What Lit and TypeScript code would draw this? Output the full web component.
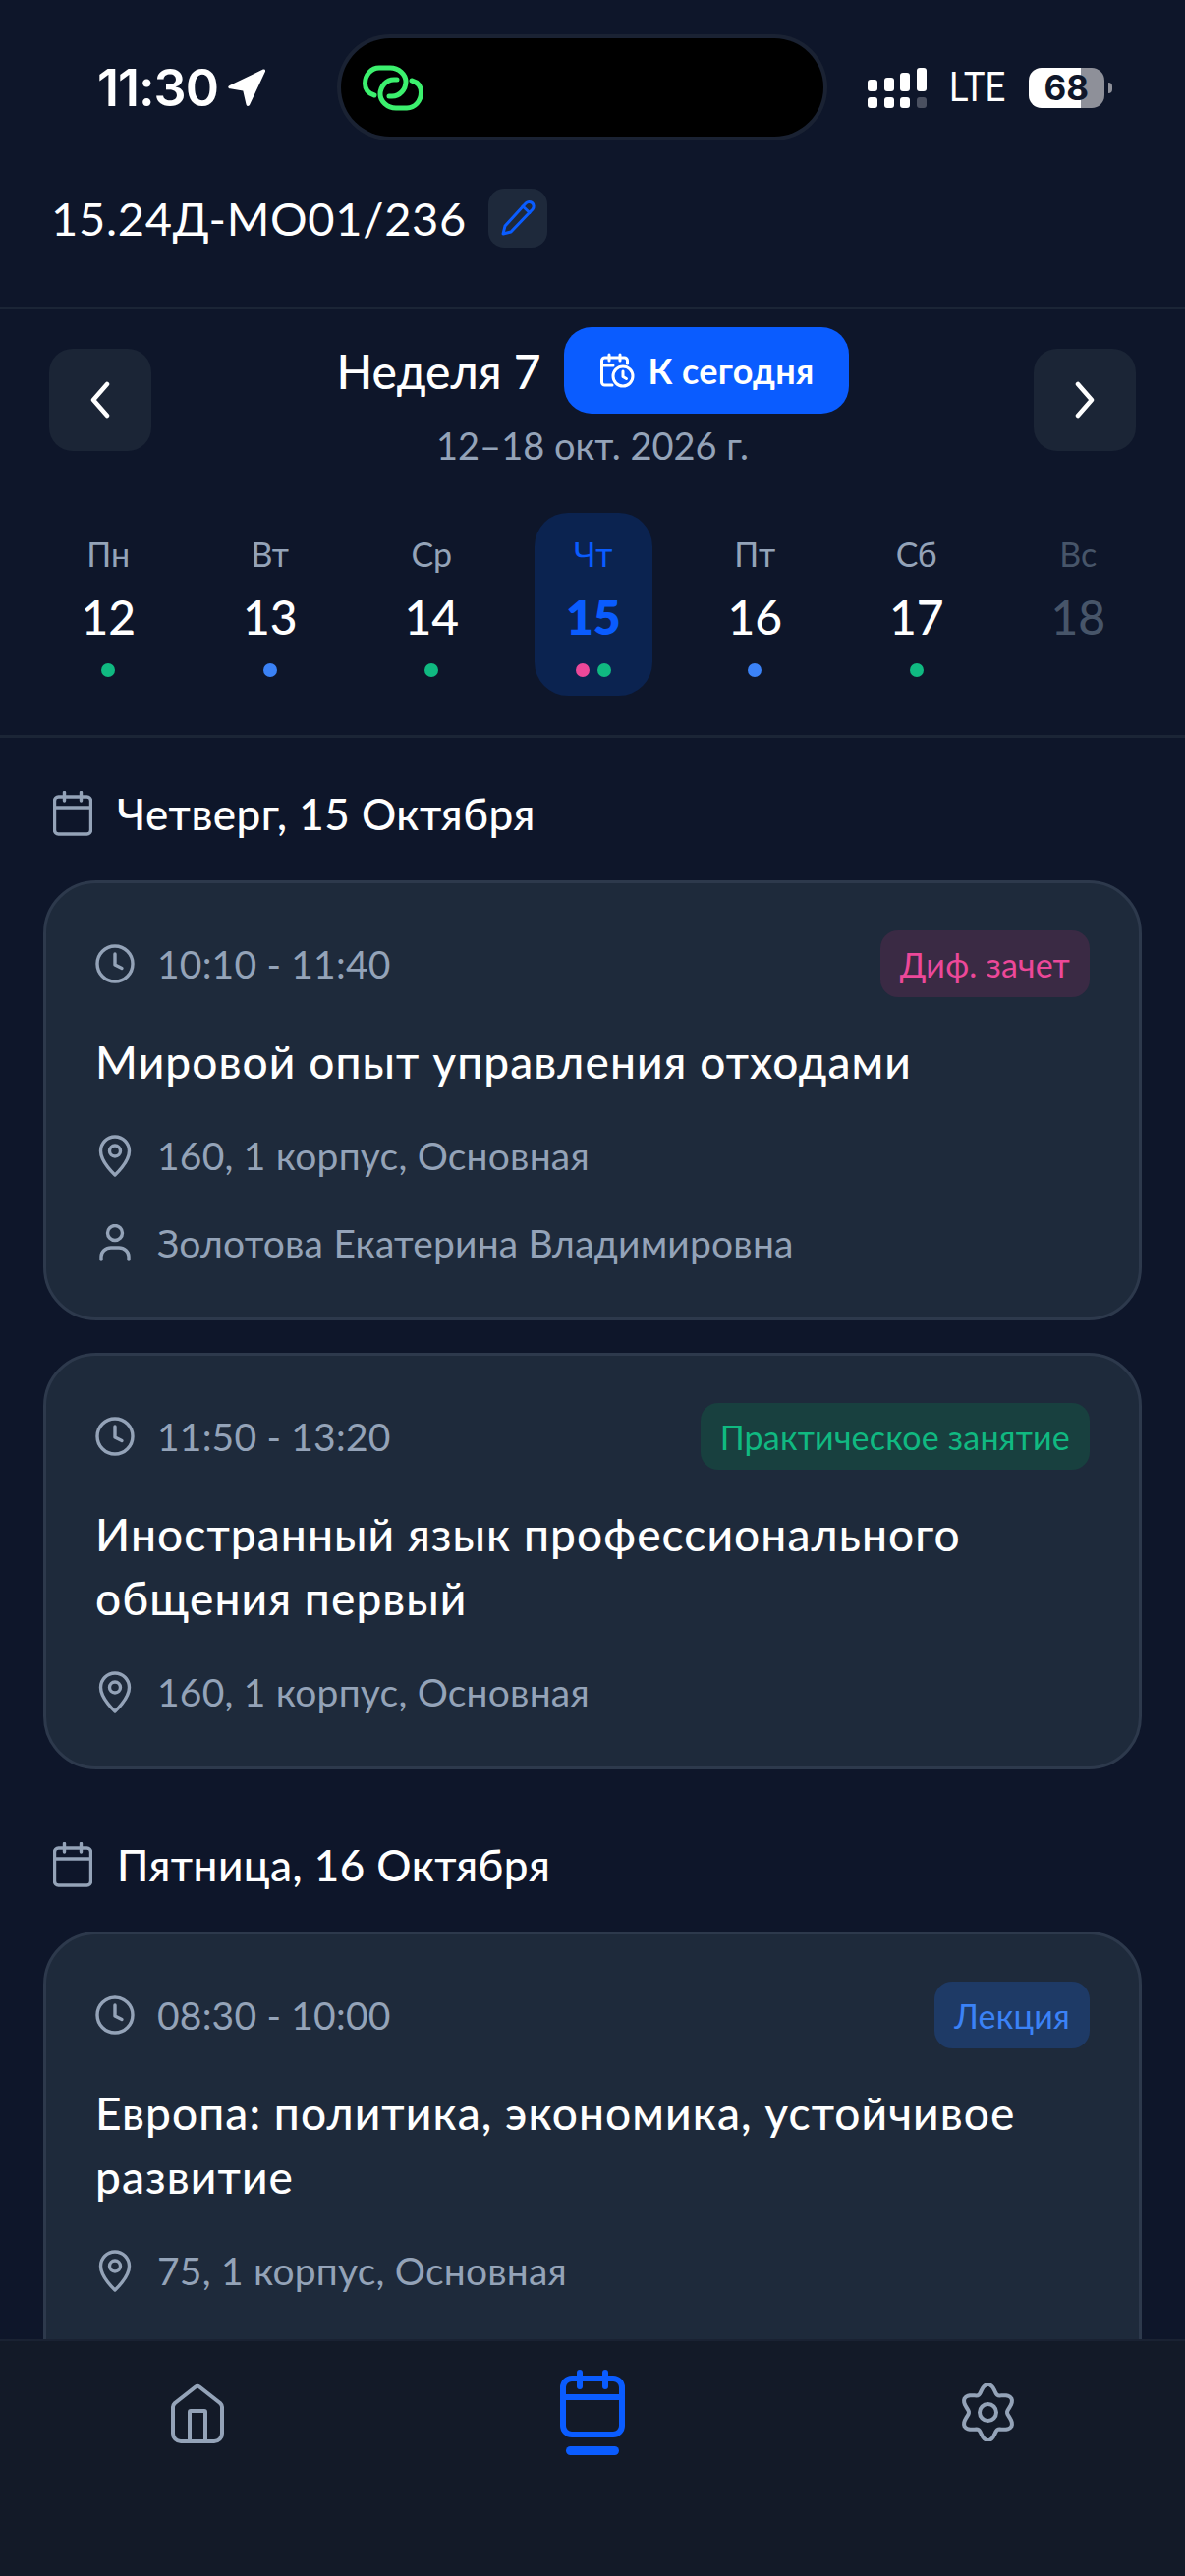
import { LitElement, css, html, svg } from "lit";
import { customElement } from "lit/decorators.js";

type Lesson = {
    time: string;
    tag: string;
    tagType: "pink" | "green" | "blue";
    title: string;
    place: string;
    teacher?: string;
};

const days = [
    { name: "Пн", num: "12", dots: ["green"] },
    { name: "Вт", num: "13", dots: ["blue"] },
    { name: "Ср", num: "14", dots: ["green"] },
    { name: "Чт", num: "15", dots: ["pink", "green"], active: true },
    { name: "Пт", num: "16", dots: ["blue"] },
    { name: "Сб", num: "17", dots: ["green"] },
    { name: "Вс", num: "18", dots: [], off: true },
];

const thursday: Lesson[] = [
    {
        time: "10:10 - 11:40",
        tag: "Диф. зачет",
        tagType: "pink",
        title: "Мировой опыт управления отходами",
        place: "160, 1 корпус, Основная",
        teacher: "Золотова Екатерина Владимировна",
    },
    {
        time: "11:50 - 13:20",
        tag: "Практическое занятие",
        tagType: "green",
        title: "Иностранный язык профессионального общения первый",
        place: "160, 1 корпус, Основная",
    },
];

const friday: Lesson[] = [
    {
        time: "08:30 - 10:00",
        tag: "Лекция",
        tagType: "blue",
        title: "Европа: политика, экономика, устойчивое развитие",
        place: "75, 1 корпус, Основная",
    },
];

// w/h in px, the viewBox is the same size so stroke widths stay real pixels
const icon = (w: number, h: number, body: unknown, sw = 3.4) => html`<svg class="ic" width=${w} height=${h} viewBox="0 0 ${w} ${h}" fill="none" stroke="currentColor" stroke-width=${sw} stroke-linecap="round" stroke-linejoin="round">${body}</svg>`;

const clockIcon = svg`<circle cx="20" cy="20" r="18"/><path d="M20 10v11l7 3.500"/>`;
const pinIcon = svg`<path d="M20 41C20 41 5.500 28 5.500 16.500a14.500 14.500 0 0 1 29 0C34.500 28 20 41 20 41z"/><circle cx="20" cy="16.500" r="5.500"/>`;
const userIcon = svg`<circle cx="20" cy="9" r="7.500"/><path d="M6 36v-3a10 9 0 0 1 10-9h8a10 9 0 0 1 10 9v3"/>`;
const calendarIcon = svg`<rect x="1.500" y="6" width="37" height="38" rx="4"/><path d="M11.500 1.500V10M28.500 1.500V10M1.500 17h37"/>`;

// six soft lobes, same outline as the settings icon
const gearPath = () => {
    const pts: string[] = [];
    for (let a = 0; a < 360; a += 4) {
        const t = (a * Math.PI) / 180;
        const r = 23.5 + 4 * Math.cos(6 * t);
        const x = 27.5 + r * Math.sin(t);
        const y = 29.5 - r * Math.cos(t) * 1.04;
        pts.push(`${x.toFixed(2)} ${y.toFixed(2)}`);
    }
    return "M" + pts.join("L") + "z";
};

@customElement("app-root")
export class AppRoot extends LitElement {
    static styles = css`
    :host {
      display: block;
      width: 1206px;
      height: 2622px;
      background: #0e162a;
      color: #fff;
      font-family: "Lato", "Open Sans", sans-serif;
      position: relative;
      overflow: hidden;
    }
    .ic {
      flex: none;
      display: block;
    }
    .status {
      height: 140px;
      display: grid;
      grid-template-columns: 343px 498px 1fr;
      align-items: center;
      padding-top: 38px;
      box-sizing: border-box;
    }
    .clock {
      display: flex;
      align-items: center;
      justify-content: flex-end;
      gap: 9px;
      padding-right: 72px;
      font-size: 52px;
      font-weight: 600;
      font-family: "Inter", sans-serif;
      letter-spacing: -1px;
    }
    .island {
      height: 100px;
      width: 491px;
      margin-left: 4px;
      border-radius: 50px;
      background: #000;
      box-shadow: 0 0 0 4px #1a2233;
      display: flex;
      align-items: center;
      padding-left: 22px;
      box-sizing: border-box;
    }
    .sys {
      display: flex;
      align-items: center;
      padding-left: 42px;
    }
    .lte {
      width: 56px;
      margin: 0 25px 0 23px;
      font-size: 42px;
      line-height: 42px;
      font-family: "Roboto", sans-serif;
      transform: scaleX(0.87);
      transform-origin: left center;
      white-space: nowrap;
    }
    .signal {
      display: grid;
      grid-template-columns: repeat(4, 10px);
      column-gap: 6.6px;
      row-gap: 6px;
      align-items: end;
    }
    .signal i {
      display: block;
      width: 10px;
      border-radius: 3px;
      background: #fff;
    }
    .batt {
      display: flex;
      align-items: center;
      gap: 4px;
    }
    .batt-body {
      width: 77px;
      height: 41px;
      border-radius: 13px;
      background: linear-gradient(90deg, #fff 0 69%, #8e9099 69%);
      color: #0f172a;
      font: 700 35px "Inter", sans-serif;
      display: flex;
      align-items: center;
      justify-content: center;
    }
    .batt-tip {
      width: 4px;
      height: 11px;
      border-radius: 0 4px 4px 0;
      background: #8e9099;
    }
    .group {
      height: 175px;
      display: flex;
      align-items: center;
      gap: 22px;
      padding: 0 0 8px 52px;
      box-sizing: border-box;
      font-size: 47px;
      border-bottom: 3px solid #1b2536;
      letter-spacing: 0.7px;
    }
    .edit {
      width: 60px;
      height: 60px;
      border-radius: 16px;
      background: #1e293b;
      color: #0a5cff;
      display: flex;
      align-items: center;
      justify-content: center;
    }
    .week {
      padding: 18px 50px 0;
      display: flex;
      justify-content: space-between;
      align-items: flex-start;
    }
    .nav {
      margin-top: 22px;
      width: 104px;
      height: 104px;
      border-radius: 24px;
      background: #1b2536;
      display: flex;
      align-items: center;
      justify-content: center;
      color: #fff;
    }
    .week-mid {
      display: flex;
      flex-direction: column;
      align-items: center;
      gap: 9px;
    }
    .week-top {
      display: flex;
      align-items: center;
      gap: 23px;
      font-size: 48px;
      font-weight: 500;
    }
    .today {
      height: 88px;
      padding: 0 35px 0 36px;
      border-radius: 28px;
      background: #0a5cff;
      display: flex;
      align-items: center;
      gap: 14px;
      font-size: 36px;
      font-weight: 700;
      letter-spacing: 0.3px;
    }
    .range {
      font-size: 38px;
      color: #94a3b8;
    }
    .days {
      margin-top: 38px;
      padding: 8px 28px 0;
      display: grid;
      grid-template-columns: repeat(7, 164.5px);
      height: 226px;
      border-bottom: 3px solid #1b2536;
    }
    .day {
      height: 186px;
      width: 120px;
      justify-self: center;
      border-radius: 34px;
      display: flex;
      flex-direction: column;
      align-items: center;
      box-sizing: border-box;
      padding-top: 22px;
    }
    .day.active {
      background: #0b2350;
    }
    .day-name {
      font-size: 34px;
      color: #94a3b8;
      line-height: 40px;
    }
    .day-num {
      font-size: 48px;
      font-weight: 500;
      line-height: 56px;
      margin-top: 16px;
    }
    .dots {
      display: flex;
      gap: 8px;
      height: 14px;
      margin-top: 19px;
    }
    .dots i {
      width: 14px;
      height: 14px;
      border-radius: 50%;
    }
    .dot-green { background: #10b981; }
    .dot-blue { background: #3b82f6; }
    .dot-pink { background: #ec4899; }
    .day.active .day-name,
    .day.active .day-num {
      color: #0a5cff;
    }
    .day.active .day-num {
      font-weight: 800;
    }
    .day.off .day-name,
    .day.off .day-num {
      color: #475569;
    }
    .content {
      padding: 13px 44px 0;
    }
    .date-head {
      display: flex;
      align-items: center;
      gap: 25px;
      height: 132px;
      padding: 0 10px 4px;
      box-sizing: border-box;
      font-size: 44px;
      font-weight: 500;
      letter-spacing: 0.5px;
      color: #fff;
    }
    .date-head svg {
      color: #94a3b8;
    }
    .card {
      background: #1e2a3b;
      border: 3px solid #2d394c;
      border-radius: 54px;
      padding: 48px 50px 53px;
      margin-bottom: 33px;
      box-sizing: border-box;
    }
    /* the last card runs on under the tab bar */
    .card:last-child {
      padding-bottom: 160px;
    }
    .card-top {
      display: flex;
      justify-content: space-between;
      align-items: center;
    }
    .meta {
      display: flex;
      align-items: center;
      gap: 23px;
      font-size: 39px;
      letter-spacing: 0.2px;
      color: #94a3b8;
    }
    .meta svg {
      width: 40px;
    }
    .tag {
      height: 68px;
      border-radius: 18px;
      padding: 0 20px;
      display: flex;
      align-items: center;
      font-size: 34px;
      letter-spacing: 0.2px;
    }
    .tag-pink { background: #3a2a44; color: #ec4899; }
    .tag-green { background: #18403f; color: #10b981; }
    .tag-blue { background: #1e3a66; color: #3b82f6; }
    .title {
      font-size: 46px;
      font-weight: 500;
      line-height: 65px;
      letter-spacing: 1.1px;
      margin: 33px 0 40px;
    }
    .rows {
      display: flex;
      flex-direction: column;
      gap: 43px;
    }
    .tabbar {
      position: absolute;
      left: 0;
      right: 0;
      bottom: 0;
      height: 241px;
      background: #131a28;
      border-top: 2px solid #1a2233;
      display: grid;
      grid-template-columns: 402px 402px 402px;
      box-sizing: border-box;
      color: #94a3b8;
    }
    .tab {
      display: flex;
      flex-direction: column;
      align-items: center;
      padding-top: 43px;
    }
    .tab.active {
      color: #0a5cff;
      padding-top: 29px;
    }
    .tab-line {
      width: 54px;
      height: 9px;
      border-radius: 5px;
      background: #0a5cff;
      margin-top: 6px;
    }
  `;

    renderCard(l: Lesson) {
        return html`<div class="card">
            <div class="card-top">
                <div class="meta">${icon(40, 40, clockIcon)}<span>${l.time}</span></div>
                <div class="tag tag-${l.tagType}">${l.tag}</div>
            </div>
            <div class="title">${l.title}</div>
            <div class="rows">
                <div class="meta">${icon(40, 43, pinIcon)}<span>${l.place}</span></div>
                ${l.teacher ? html`<div class="meta">${icon(40, 38, userIcon)}<span>${l.teacher}</span></div>` : ""}
            </div>
        </div>`;
    }

    renderSignal() {
        const heights = [12, 14, 19, 24];
        return html`<div class="signal">
            ${heights.map((h) => html`<i style="height:${h}px"></i>`)}
            ${heights.map((_, i) => html`<i style="height:11px;${i === 3 ? "background:#4a5060" : ""}"></i>`)}
        </div>`;
    }

    render() {
        return html`
            <div class="status">
                <div class="clock">
                    <span>11:30</span>
                    <svg width="40" height="40" viewBox="0 0 38 38"><path d="M35 1.500 2.500 17c-2 1-1.500 3 .5 3.300l12.500 2 3 13c.500 2 2.500 2.300 3.500.3L37 3.500c.5-1.500-.5-2.500-2-2z" fill="#fff"/></svg>
                </div>
                <div class="island">
                    <svg width="62" height="47" viewBox="0 0 62 47" fill="none" stroke="#3cf06e" stroke-width="5" stroke-linecap="round">
                        <path d="M12 31C5 29 2.500 24 2.500 19 2.500 10 9 3 17 3h11c9 0 16 7 16 14 0 8-6 15-14 15h-3"/>
                        <path d="M50 16c7 2 9.500 7 9.500 12 0 9-6.500 16-14.500 16H34c-9 0-16-7-16-14 0-8 6-15 14-15h3"/>
                    </svg>
                </div>
                <div class="sys">
                    ${this.renderSignal()}
                    <span class="lte">LTE</span>
                    <div class="batt"><div class="batt-body">68</div><div class="batt-tip"></div></div>
                </div>
            </div>
            <div class="group">
                <span>15.24Д-МО01/236</span>
                <div class="edit">${icon(38, 38, svg`<path d="M27 4a4.500 4.500 0 0 1 7 6L12 33l-8 2 2-8L27 4z"/><path d="m24 7 7 6.500"/>`, 3)}</div>
            </div>
            <div class="week">
                <div class="nav">${icon(22, 38, svg`<path d="M18 3 4 19l14 16"/>`, 4.5)}</div>
                <div class="week-mid">
                    <div class="week-top">
                        <span>Неделя 7</span>
                        <div class="today">
                            ${icon(36, 36, svg`<path d="M13 33H5.500a3 3 0 0 1-3-3V8a3 3 0 0 1 3-3h20a3 3 0 0 1 3 3v3"/><path d="M10 2v6M21 2v6M2.500 13H14"/><circle cx="24" cy="24" r="10"/><path d="M24 19v5.500l3.500 2"/>`, 3)}
                            <span>К сегодня</span>
                        </div>
                    </div>
                    <div class="range">12–18 окт. 2026 г.</div>
                </div>
                <div class="nav">${icon(22, 38, svg`<path d="m4 3 14 16L4 35"/>`, 4.5)}</div>
            </div>
            <div class="days">
                ${days.map((d) => html`<div class="day ${d.active ? "active" : ""} ${d.off ? "off" : ""}">
                    <div class="day-name">${d.name}</div>
                    <div class="day-num">${d.num}</div>
                    <div class="dots">${d.dots.map((c) => html`<i class="dot-${c}"></i>`)}</div>
                </div>`)}
            </div>
            <div class="content">
                <div class="date-head">${icon(40, 46, calendarIcon)}<span>Четверг, 15 Октября</span></div>
                ${thursday.map((l) => this.renderCard(l))}
                <div class="date-head">${icon(40, 46, calendarIcon)}<span>Пятница, 16 Октября</span></div>
                ${friday.map((l) => this.renderCard(l))}
            </div>
            <div class="tabbar">
                <div class="tab">${icon(58, 61, svg`<path d="M6 20 27 3.500q2-1.500 4 0L52 20q2 2 2 4v27a8 8 0 0 1-8 8H12a8 8 0 0 1-8-8V24q0-2 2-4z"/><path d="M21 59V29a1 1 0 0 1 1-1h14a1 1 0 0 1 1 1v30"/>`, 4)}</div>
                <div class="tab active">
                    ${icon(66, 72, svg`<rect x="3" y="9" width="60" height="57" rx="9"/><path d="M20 3v14M46 3v14M3 28h60"/>`, 6)}
                    <div class="tab-line"></div>
                </div>
                <div class="tab">${icon(55, 59, svg`<path d=${gearPath()}/><circle cx="27.500" cy="29.500" r="8.500"/>`, 4)}</div>
            </div>
        `;
    }
}
